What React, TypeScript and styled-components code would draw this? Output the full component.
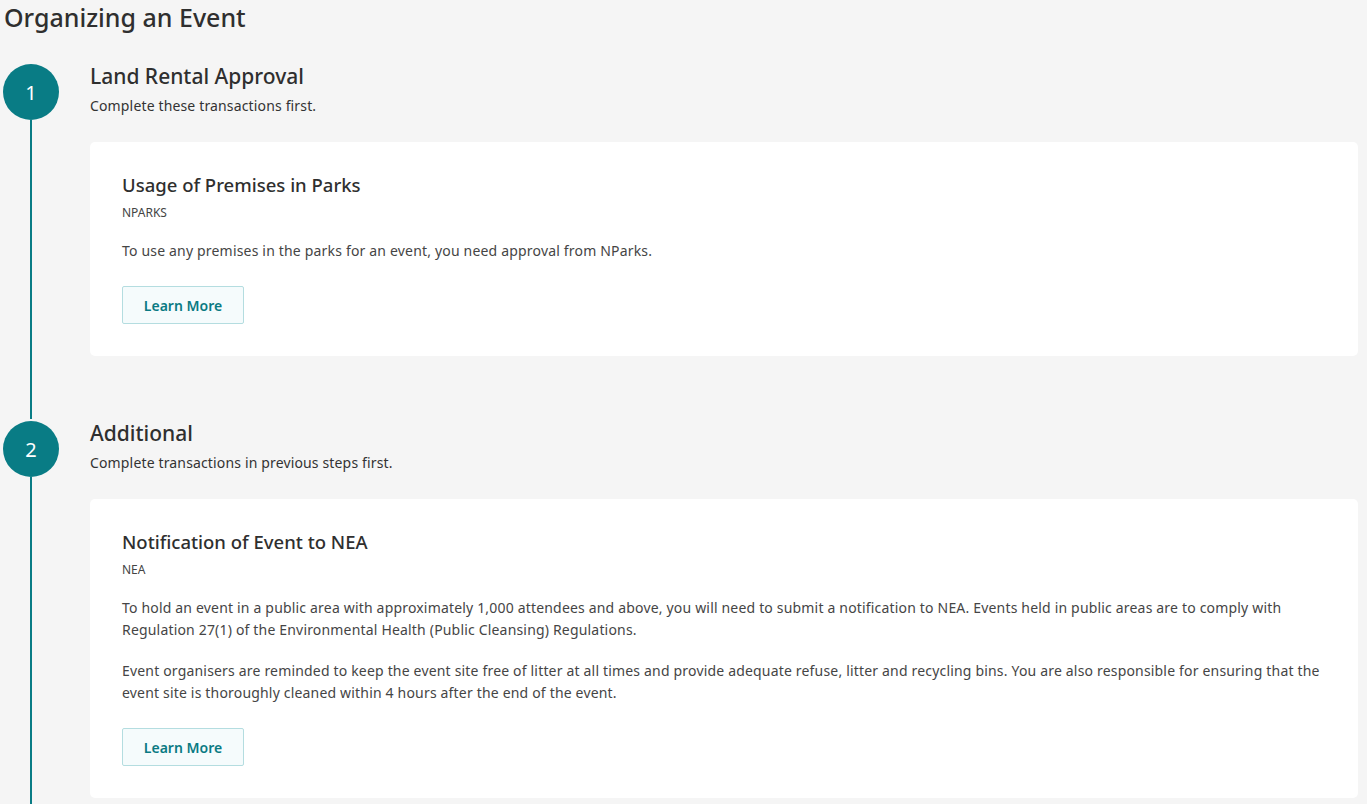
import React from "react";
import styled, { createGlobalStyle } from "styled-components";

const Global = createGlobalStyle`
  html, body { margin: 0; padding: 0; background: #f5f5f5; }
  body { font-family: "Noto Sans", "Open Sans", sans-serif; color: #333; }
  * { box-sizing: border-box; }
`;

const Page = styled.div`
  padding: 0 9px 0 3px;
  min-height: 804px;
`;

const Title = styled.h1`
  margin: 0 0 28px 1px;
  font-size: 25px;
  line-height: 34px;
  font-weight: 500;
  color: #2f2f2f;
`;

const Step = styled.section`
  display: flex;
`;

const Rail = styled.div`
  width: 56px;
  flex: none;
  display: flex;
  flex-direction: column;
  align-items: center;
  padding-top: 2px;
`;

const Circle = styled.div`
  width: 56px;
  height: 56px;
  border-radius: 50%;
  background: #097c85;
  color: #fff;
  display: flex;
  align-items: center;
  justify-content: center;
  font-size: 20px;
  flex: none;
`;

const Line = styled.div`
  width: 2px;
  flex: 1;
  background: #097c85;
`;

const Content = styled.div<{ $last?: boolean }>`
  flex: 1;
  margin-left: 31px;
  padding-bottom: ${(p) => (p.$last ? "40px" : "63px")};
`;

const StepHeading = styled.h2`
  margin: 0;
  font-size: 21px;
  line-height: 28px;
  font-weight: 500;
  color: #2f2f2f;
`;

const StepNote = styled.p`
  margin: 6px 0 26px;
  font-size: 14px;
  line-height: 20px;
  letter-spacing: 0.15px;
  color: #333;
`;

const Card = styled.article`
  background: #fff;
  border-radius: 5px;
  padding: 32px;
`;

const CardTitle = styled.h3`
  margin: 0;
  font-size: 18.5px;
  line-height: 22px;
  font-weight: 500;
  color: #2f2f2f;
`;

const Agency = styled.div`
  margin-top: 9px;
  font-size: 12px;
  line-height: 16px;
  color: #444;
`;

const Body = styled.p`
  margin: 19px 0 0;
  font-size: 14px;
  line-height: 22px;
  letter-spacing: 0.18px;
  color: #454545;
  & + & { margin-top: 19px; }
`;

const Button = styled.button`
  margin-top: 24px;
  display: block;
  height: 38px;
  width: 122px;
  padding: 0;
  border: 1px solid #b4dde0;
  border-radius: 2px;
  background: #f5fbfc;
  color: #0a7a83;
  font-family: inherit;
  font-size: 14px;
  font-weight: 600;
  cursor: pointer;
`;

type Item = { title: string; agency: string; body: string[] };
type StepData = { n: number; heading: string; note: string; items: Item[] };

const steps: StepData[] = [
  {
    n: 1,
    heading: "Land Rental Approval",
    note: "Complete these transactions first.",
    items: [
      {
        title: "Usage of Premises in Parks",
        agency: "NPARKS",
        body: ["To use any premises in the parks for an event, you need approval from NParks."],
      },
    ],
  },
  {
    n: 2,
    heading: "Additional",
    note: "Complete transactions in previous steps first.",
    items: [
      {
        title: "Notification of Event to NEA",
        agency: "NEA",
        body: [
          "To hold an event in a public area with approximately 1,000 attendees and above, you will need to submit a notification to NEA. Events held in public areas are to comply with Regulation 27(1) of the Environmental Health (Public Cleansing) Regulations.",
          "Event organisers are reminded to keep the event site free of litter at all times and provide adequate refuse, litter and recycling bins. You are also responsible for ensuring that the event site is thoroughly cleaned within 4 hours after the end of the event.",
        ],
      },
    ],
  },
];

export default function App() {
  return (
    <>
      <Global />
      <Page>
        <Title>Organizing an Event</Title>
        {steps.map((s, i) => (
          <Step key={s.n}>
            <Rail>
              <Circle>{s.n}</Circle>
              <Line />
            </Rail>
            <Content $last={i === steps.length - 1}>
              <StepHeading>{s.heading}</StepHeading>
              <StepNote>{s.note}</StepNote>
              {s.items.map((it) => (
                <Card key={it.title}>
                  <CardTitle>{it.title}</CardTitle>
                  <Agency>{it.agency}</Agency>
                  {it.body.map((b, j) => (
                    <Body key={j}>{b}</Body>
                  ))}
                  <Button>Learn More</Button>
                </Card>
              ))}
            </Content>
          </Step>
        ))}
      </Page>
    </>
  );
}
